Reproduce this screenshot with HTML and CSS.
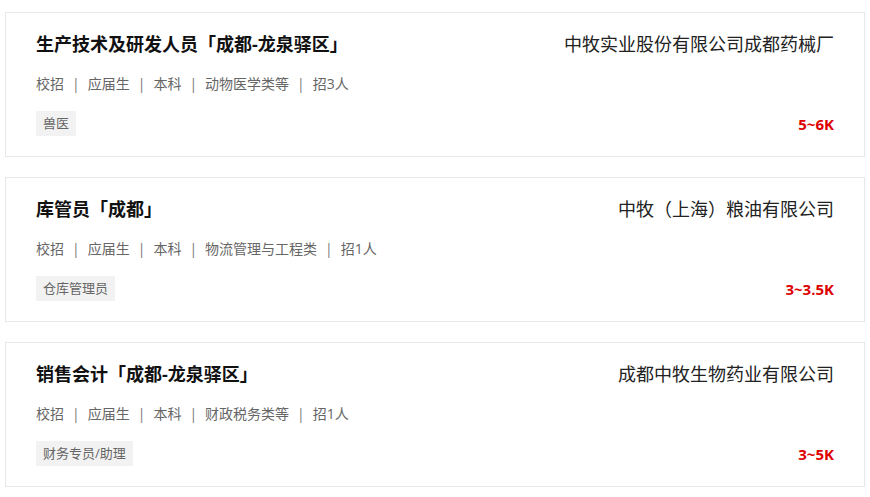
FILE: index.html
```html
<!DOCTYPE html>
<html lang="zh-CN">
<head>
    <meta charset="UTF-8" />
    <meta name="viewport" content="width=device-width, initial-scale=1.0" />
    <title>职位列表</title>
    <link rel="stylesheet" href="styles.css">
</head>
<body>
    <div class="job-list">
        <div class="job-card">
            <div class="job-top">
                <h3 class="job-title">生产技术及研发人员「成都-龙泉驿区」</h3>
                <span class="company">中牧实业股份有限公司成都药械厂</span>
            </div>
            <div class="job-meta">
                <span>校招</span><span class="sep">|</span><span>应届生</span><span class="sep">|</span><span>本科</span><span class="sep">|</span><span>动物医学类等</span><span class="sep">|</span><span>招3人</span>
            </div>
            <div class="job-bottom">
                <span class="tag">兽医</span>
                <span class="salary">5~6K</span>
            </div>
        </div>

        <div class="job-card">
            <div class="job-top">
                <h3 class="job-title">库管员「成都」</h3>
                <span class="company">中牧（上海）粮油有限公司</span>
            </div>
            <div class="job-meta">
                <span>校招</span><span class="sep">|</span><span>应届生</span><span class="sep">|</span><span>本科</span><span class="sep">|</span><span>物流管理与工程类</span><span class="sep">|</span><span>招1人</span>
            </div>
            <div class="job-bottom">
                <span class="tag">仓库管理员</span>
                <span class="salary">3~3.5K</span>
            </div>
        </div>

        <div class="job-card">
            <div class="job-top">
                <h3 class="job-title">销售会计「成都-龙泉驿区」</h3>
                <span class="company">成都中牧生物药业有限公司</span>
            </div>
            <div class="job-meta">
                <span>校招</span><span class="sep">|</span><span>应届生</span><span class="sep">|</span><span>本科</span><span class="sep">|</span><span>财政税务类等</span><span class="sep">|</span><span>招1人</span>
            </div>
            <div class="job-bottom">
                <span class="tag">财务专员/助理</span>
                <span class="salary">3~5K</span>
            </div>
        </div>
    </div>
</body>
</html>
```

FILE: styles.css
```css
body {
    font-family: "Open Sans", "Noto Sans CJK SC", sans-serif;
    margin: 0;
    padding: 12px 5px;
    background-color: #fff;
}

.job-list {
    display: flex;
    flex-direction: column;
    gap: 20px;
}

.job-card {
    border: 1px solid #e8e8e8;
    padding: 18px 30px 20px;
    background-color: #fff;
}

.job-top {
    display: flex;
    justify-content: space-between;
    align-items: center;
    height: 26px;
}

.job-title {
    margin: 0;
    font-size: 18px;
    font-weight: bold;
    color: #111;
    line-height: 26px;
}

.company {
    font-size: 18px;
    color: #222;
    line-height: 26px;
}

.job-meta {
    margin-top: 17px;
    font-size: 14px;
    line-height: 20px;
    color: #666;
}

.sep {
    padding: 0 8px;
    color: #777;
}

.job-bottom {
    display: flex;
    justify-content: space-between;
    align-items: center;
    margin-top: 17px;
}

.tag {
    background-color: #f2f2f2;
    color: #666;
    font-size: 13px;
    line-height: 25px;
    padding: 0 7px;
}

.salary {
    color: #d00;
    font-size: 15px;
    font-weight: bold;
}
```
